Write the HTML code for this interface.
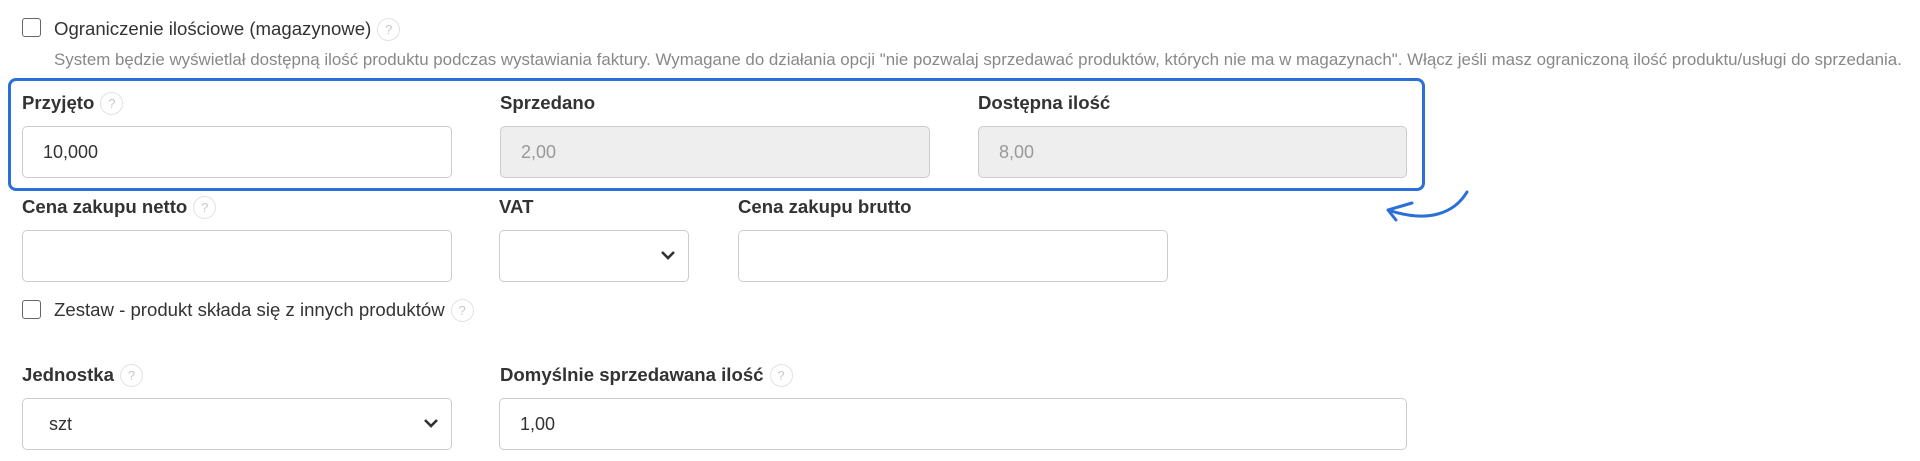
<!DOCTYPE html>
<html><head><meta charset="utf-8"><style>
body{margin:0;width:1920px;height:461px;background:#fff;font-family:"Liberation Sans",Arial,sans-serif;color:#333;position:relative;overflow:hidden}
.a{position:absolute;white-space:nowrap;display:flex;align-items:center}
.lb{font-weight:bold;font-size:18.6px;line-height:24px}
.nl{font-size:18.6px;line-height:24px}
.cb{position:absolute;width:17px;height:17px;border:1.5px solid #666;border-radius:3px;background:#fff}
.h{display:inline-block;width:21px;height:21px;border:1.5px solid #e2e2e2;border-radius:50%;color:#c8c8c8;font-size:13px;line-height:21px;text-align:center;font-weight:normal;margin-left:6px}
.in{position:absolute;border:1.5px solid #ccc;border-radius:5px;background:#fff;box-sizing:border-box;font-size:18px;color:#333;padding-left:20px;display:flex;align-items:center}
.dis{background:#eee;color:#999}
.chev{position:absolute;right:12px;top:18px}
</style></head><body>
<div class="cb" style="left:22px;top:18px"></div>
<div class="a nl" style="left:54px;top:17px">Ograniczenie ilościowe (magazynowe)<span class="h">?</span></div>
<div class="a" style="left:54px;top:50px;font-size:16.9px;line-height:20px;color:#888">System będzie wyświetlał dostępną ilość produktu podczas wystawiania faktury. Wymagane do działania opcji "nie pozwalaj sprzedawać produktów, których nie ma w magazynach". Włącz jeśli masz ograniczoną ilość produktu/usługi do sprzedania.</div>

<div style="position:absolute;left:8px;top:78px;width:1417px;height:113px;box-sizing:border-box;border:3.5px solid #2b6fd9;border-radius:8px"></div>

<div class="a lb" style="left:22px;top:91px">Przyjęto<span class="h">?</span></div>
<div class="in" style="left:22px;top:126px;width:430px;height:52px">10,000</div>
<div class="a lb" style="left:500px;top:91px">Sprzedano</div>
<div class="in dis" style="left:500px;top:126px;width:430px;height:52px">2,00</div>
<div class="a lb" style="left:978px;top:91px">Dostępna ilość</div>
<div class="in dis" style="left:978px;top:126px;width:429px;height:52px">8,00</div>

<svg style="position:absolute;left:1370px;top:180px" width="110" height="50" viewBox="1370 180 110 50"><path d="M1467 192 C1455 212 1430 224 1388 210 M1388 210 L1412 203 M1388 210 L1396 220" fill="none" stroke="#2b6fd9" stroke-width="3" stroke-linecap="round"/></svg>

<div class="a lb" style="left:22px;top:195px">Cena zakupu netto<span class="h">?</span></div>
<div class="in" style="left:22px;top:230px;width:430px;height:52px"></div>
<div class="a lb" style="left:499px;top:195px">VAT</div>
<div class="in" style="left:499px;top:230px;width:190px;height:52px"><svg class="chev" width="16" height="12" viewBox="0 0 16 12"><path d="M2 3 L8 9 L14 3" fill="none" stroke="#333" stroke-width="2.6"/></svg></div>
<div class="a lb" style="left:738px;top:195px">Cena zakupu brutto</div>
<div class="in" style="left:738px;top:230px;width:430px;height:52px"></div>

<div class="cb" style="left:22px;top:300px"></div>
<div class="a nl" style="left:54px;top:298px">Zestaw - produkt składa się z innych produktów<span class="h">?</span></div>

<div class="a lb" style="left:22px;top:363px">Jednostka<span class="h">?</span></div>
<div class="in" style="left:22px;top:398px;width:430px;height:52px;padding-left:26px">szt<svg class="chev" width="16" height="12" viewBox="0 0 16 12"><path d="M2 3 L8 9 L14 3" fill="none" stroke="#333" stroke-width="2.6"/></svg></div>
<div class="a lb" style="left:500px;top:363px">Domyślnie sprzedawana ilość<span class="h">?</span></div>
<div class="in" style="left:499px;top:398px;width:908px;height:52px">1,00</div>
</body></html>
